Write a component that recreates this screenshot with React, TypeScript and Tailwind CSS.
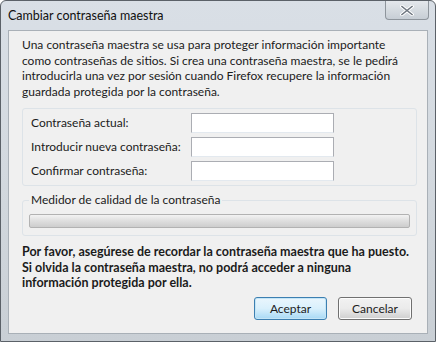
export default function App() {
  const font = { fontFamily: 'Lato, "Noto Sans", "Liberation Sans", sans-serif' };
  const fields = ['Contraseña actual:', 'Introducir nueva contraseña:', 'Confirmar contraseña:'];

  return (
    <div
      className="w-[436px] h-[342px] bg-gradient-to-b from-[#d9dfe6] via-[#d3d9df] to-[#c9cfd5] border border-[#5b6168] rounded-t-[6px] flex flex-col overflow-hidden text-[12px] text-[#1b1b1b]"
      style={font}
    >
      {/* title bar */}
      <div className="h-[29px] flex items-start justify-between pl-[7px] pr-[6px]">
        <span className="mt-[6px] text-[12.5px] text-[#101010]">Cambiar contraseña maestra</span>
        <div className="w-[44px] h-[19px] rounded-b-[4px] border border-[#8e959c] border-t-0 bg-gradient-to-b from-[#e4e8ec] to-[#c7ced5] flex items-center justify-center">
          <svg width="14" height="11" viewBox="0 0 14 11">
            <path d="M2 1.5 L12 9.5 M12 1.5 L2 9.5" stroke="#ffffff" strokeWidth="3.4" strokeLinecap="square" />
            <path d="M2 1.5 L12 9.5 M12 1.5 L2 9.5" stroke="#6f7780" strokeWidth="1.6" strokeLinecap="square" />
          </svg>
        </div>
      </div>

      {/* client area */}
      <div className="mx-[7px] flex-1 mb-[7px] bg-[#f0f0f0] border border-[#a9b0b7] flex flex-col px-[13px] pt-[6px] whitespace-nowrap">
        <p className="leading-[15.5px]">
          Una contraseña maestra se usa para proteger información importante
          <br />
          como contraseñas de sitios. Si crea una contraseña maestra, se le pedirá
          <br />
          introducirla una vez por sesión cuando Firefox recupere la información
          <br />
          guardada protegida por la contraseña.
        </p>

        <div className="mt-[9px] border border-[#dde3e8] rounded-[3px] pl-[8px] pr-[8px] py-[4px] flex flex-col gap-[4px] w-[395px]">
          {fields.map((label) => (
            <div key={label} className="flex items-center h-[20px]">
              <span className="w-[160px]">{label}</span>
              <div className="w-[143px] h-[20px] bg-white border border-[#abadb3] border-b-[#e3e9ef]" />
            </div>
          ))}
        </div>

        <div className="mt-[14px] border border-[#dde3e8] rounded-[3px] w-[395px] pl-[6px] pr-[6px] pb-[7px] flex flex-col">
          <span className="-mt-[9px] bg-[#f0f0f0] self-start px-[2px] leading-[16px]">Medidor de calidad de la contraseña</span>
          <div className="mt-[6px] h-[14px] rounded-[2px] border border-[#b2b2b2] bg-gradient-to-b from-[#f3f3f3] via-[#dedede] to-[#cdcdcd]" />
        </div>

        <p className="mt-[8px] font-bold text-[12.5px] leading-[15.5px]">
          Por favor, asegúrese de recordar la contraseña maestra que ha puesto.
          <br />
          Si olvida la contraseña maestra, no podrá acceder a ninguna
          <br />
          información protegida por ella.
        </p>

        <div className="mt-auto mb-[13px] flex justify-end gap-[11px] pr-[2px]">
          <button className="w-[73px] h-[23px] rounded-[3px] border border-[#3c7fb1] bg-gradient-to-b from-[#eaf6fd] via-[#d9f0fc] to-[#a7d9f5] shadow-[inset_0_0_0_1px_#c4e5f6]">
            Aceptar
          </button>
          <button className="w-[74px] h-[23px] rounded-[3px] border border-[#707070] bg-gradient-to-b from-[#f2f2f2] via-[#ebebeb] to-[#cfcfcf] shadow-[inset_0_0_0_1px_#fcfcfc]">
            Cancelar
          </button>
        </div>
      </div>
    </div>
  );
}
